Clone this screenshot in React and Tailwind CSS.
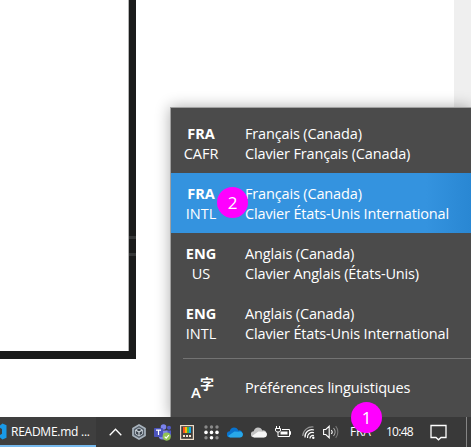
import React from "react";

const layouts = [
  { lang: "FRA", code: "CAFR", name: "Français (Canada)", keyboard: "Clavier Français (Canada)" },
  { lang: "FRA", code: "INTL", name: "Français (Canada)", keyboard: "Clavier États-Unis International", selected: true },
  { lang: "ENG", code: "US", name: "Anglais (Canada)", keyboard: "Clavier Anglais (États-Unis)" },
  { lang: "ENG", code: "INTL", name: "Anglais (Canada)", keyboard: "Clavier États-Unis International" },
];

function LayoutRow({ item }) {
  return (
    <div className={"flex h-[60px] pt-[11px] leading-5 " + (item.selected ? "bg-gradient-to-r from-[#3493df] from-85% to-[#2987d3]" : "")}>
      <div className="w-[60px] text-center text-[14.5px]">
        <div className="font-bold">{item.lang}</div>
        <div>{item.code}</div>
      </div>
      <div className="pl-[14px] text-[14.5px] tracking-[-0.15px] whitespace-nowrap">
        <div>{item.name}</div>
        <div>{item.keyboard}</div>
      </div>
    </div>
  );
}

function LanguageMenu() {
  return (
    <div className="absolute left-[170px] top-[107px] h-[310px] w-[301px] border-l border-t border-[#a0a0a0] bg-[#4b4b4b] pt-[5px] shadow-[0_0_14px_rgba(0,0,0,0.32)]">
      {layouts.map((item, i) => <LayoutRow key={i} item={item} />)}
      <div className="mt-[5px] ml-3 h-px bg-[#737373]" />
      <div className="flex h-[57px] items-center">
        <div className="flex w-[60px] justify-center pl-[3px]">
          <div className="flex items-center">
            <span className="pt-[10px] font-['Open_Sans',sans-serif] text-[15px] leading-[15px] font-semibold">A</span>
            <span className="-ml-px pb-[10px] font-['Noto_Sans_CJK_JP',sans-serif] text-[14px] leading-[14px] font-bold">字</span>
          </div>
        </div>
        <div className="pl-[14px] text-[14.5px] tracking-[-0.18px] whitespace-nowrap">Préférences linguistiques</div>
      </div>
    </div>
  );
}

function Badge({ children, className }) {
  return (
    <div className={"absolute flex size-[31px] items-center justify-center rounded-full bg-[#ff00ff] text-[17px] leading-none text-white " + className}>
      {children}
    </div>
  );
}

function TrayIcons() {
  return (
    <>
      <svg className="ml-[13px] shrink-0" width="13" height="8" viewBox="0 0 13 8" fill="none" stroke="#fff" strokeWidth="1.3"><path d="M.7 7.2 6.5 1.2 12.3 7.2" /></svg>
      <svg className="ml-[9px] shrink-0" width="16" height="18" viewBox="0 0 16 18">
        <path d="M8 2 14 5.400v7.200L8 16 2 12.600V5.400Z" fill="#555e68" stroke="#a9b4be" strokeWidth="1.7" />
        <path d="M8 5 11.4 7v4L8 13 4.600 11V7Z" fill="#3a424b" stroke="#b9c2ca" strokeWidth="1" />
        <path d="M4.600 7 8 9l3.400-2M8 9v4" fill="none" stroke="#cbd2d8" strokeWidth="1.2" />
      </svg>
      <svg className="ml-[7px] shrink-0" width="18" height="17" viewBox="0 0 18 17">
        <circle cx="9.5" cy="3" r="2.8" fill="#7b83eb" /><circle cx="15" cy="3.8" r="2" fill="#5059c9" />
        <path d="M12 6.5h5v4.2a3 3 0 0 1-5 2Z" fill="#5059c9" />
        <path d="M5 6.5h8.5V11a5 5 0 0 1-8.5 3Z" fill="#7b83eb" />
        <rect x="0" y="4" width="9" height="9" rx=".8" fill="#4b53bc" />
        <path d="M2 6.2h5M4.5 6.2V11" stroke="#fff" strokeWidth="1.2" />
        <circle cx="12.7" cy="12.6" r="4.1" fill="#92c353" /><path d="m10.7 12.6 1.5 1.5 2.7-3" fill="none" stroke="#fff" strokeWidth="1.2" />
      </svg>
      <svg className="ml-[8px] shrink-0" width="14" height="15" viewBox="0 0 14 15">
        <rect x=".6" y=".6" width="12.8" height="13.8" fill="#443f3b" stroke="#eadbc8" strokeWidth="1.2" />
        <path d="M3 2h2v6H3Z" fill="#f35325" /><path d="M5 2h2v6H5Z" fill="#ffb900" /><path d="M7 2h2v6H7Z" fill="#45b649" /><path d="M9 2h2v6H9Z" fill="#0ea5e9" />
        <path d="M3 10h2v2H3ZM6 10h2v2H6ZM9 10h2v2H9Z" fill="#f4e6d4" />
      </svg>
      <svg className="ml-[10px] shrink-0" width="15" height="15" viewBox="0 0 15 15">
        <g fill="#8a8a8a"><circle cx="2" cy="2" r="1.7" /><circle cx="7.5" cy="2" r="1.7" /><circle cx="13" cy="2" r="1.7" /><circle cx="2" cy="12.7" r="1.7" /><circle cx="13" cy="12.7" r="1.7" /></g>
        <g fill="#fff"><circle cx="2" cy="7.4" r="1.8" /><circle cx="7.5" cy="7.4" r="1.8" /><circle cx="13" cy="7.4" r="1.8" /><circle cx="7.5" cy="12.7" r="1.8" /></g>
      </svg>
      <svg className="ml-[8px] shrink-0" width="16" height="11" viewBox="0 0 16 11">
        <path d="M3 10.3a3 3 0 0 1-.3-6C3.2 1.8 5 .5 7 .5c2.2 0 3.6 1.1 4.3 3a3.4 3.4 0 0 1 1.6 6.8Z" fill="#0873cf" />
        <path d="M3 10.5 1 9l6.4-4.5 4.1.2c2.8-.6 4.4 1 4.4 2.9s-1.2 2.9-3 2.9Z" fill="#28a8ea" />
      </svg>
      <svg className="ml-[8px] shrink-0" width="16" height="11" viewBox="0 0 16 11">
        <path d="M3 10.3a3 3 0 0 1-.3-6C3.2 1.8 5 .5 7 .5c2.2 0 3.6 1.1 4.3 3a3.4 3.4 0 0 1 1.6 6.8Z" fill="#c4c4c4" />
        <path d="M3 10.5 1 9l6.4-4.5 4.1.2c2.8-.6 4.4 1 4.4 2.9s-1.2 2.9-3 2.9Z" fill="#f5f5f5" />
      </svg>
      <svg className="ml-[8px] shrink-0" width="16" height="13" viewBox="0 0 16 13" fill="none" stroke="#fff" strokeWidth="1">
        <path d="M1.500 0v2.500M4.500 0v2.500M.5 2.500h5V4C5.500 5.500 4.500 6 3 6S.5 5.500.5 4ZM3 6v4.500h11.500v-7H7M14.500 5.500h1v3h-1" />
        <path d="M5.500 5.500h7v3h-7Z" fill="#fff" stroke="none" />
      </svg>
      <svg className="ml-[11px] shrink-0" width="13" height="13" viewBox="0 0 13 13" fill="none" strokeWidth="1.2">
        <path d="M.7 10A9.500 9.500 0 0 1 11.500 1" stroke="#969696" />
        <g stroke="#fff"><path d="M3 11.500A7 7 0 0 1 12 4M5.500 12A4.800 4.800 0 0 1 12 6.800M8 12.500a3 3 0 0 1 4-3" /></g>
        <circle cx="11.300" cy="11.800" r="1.200" fill="#fff" />
      </svg>
      <svg className="ml-[8px] shrink-0" width="17" height="14" viewBox="0 0 17 14" fill="none" stroke="#fff" strokeWidth="1.100">
        <path d="M.6 4.500h2.200L6.200 1.200v11.600L2.800 9.500H.6ZM8.300 5a3 3 0 0 1 0 4" />
        <path d="M10.500 3a6 6 0 0 1 0 8" stroke="#b0b0b0" /><path d="M12.700 1.200a9 9 0 0 1 0 11.600" stroke="#777" />
      </svg>
    </>
  );
}

function Taskbar() {
  return (
    <div className="flex h-[30px] items-center bg-[#393939] text-[12px] whitespace-nowrap text-white">
      <div className="flex h-full w-24 items-center border-b-2 border-[#76b9ed] bg-[#3f3f3f]">
        <svg className="shrink-0" width="7" height="17" viewBox="0 0 7 17"><path d="M0 2.500 2.500.5 6.500 2.300v12.400L2.500 16.500 0 14.500V12l2-1.200V6L0 4.800Z" fill="#199ae8" /></svg>
        <span className="ml-1 w-[85px] pt-px tracking-[-0.25px]">README.md ...</span>
      </div>
      <TrayIcons />
      <span className="ml-[10px] w-[24px] tracking-[-0.2px]">FRA</span>
      <span className="ml-[12px] w-[29px] tracking-[-0.75px]">10:48</span>
      <svg className="ml-[15px] shrink-0" width="17" height="17" viewBox="0 0 17 17" fill="none" stroke="#fff" strokeWidth="1.300"><path d="M1 1.500h15v12h-5l-2.500 2.300L6 13.500H1Z" /></svg>
      <div className="ml-auto h-full w-[5px] border-l border-[#858585]" />
    </div>
  );
}

export default function App() {
  return (
    <div className="relative h-[447px] w-[471px] overflow-hidden bg-white font-['Open_Sans','Noto_Sans',sans-serif] text-white">
      <div className="flex h-[417px] justify-between">
        <div className="flex h-[359px] w-[136px] border-b-8 border-[#1a1b1b]">
          <div className="flex-1 border-r border-[#b5b5b5]" />
          <div className="flex w-[7px] flex-col gap-[14px] bg-[#1a1b1b] pt-[236px]">
            <div className="h-[3px] bg-[#353636]" />
            <div className="h-[3px] bg-[#353636]" />
          </div>
        </div>
        <div className="w-[17px] bg-[#efefef]" />
      </div>
      <LanguageMenu />
      <div className="relative"><Taskbar /></div>
      <Badge className="left-[217px] top-[187px]">2</Badge>
      <Badge className="left-[351px] top-[402px]">1</Badge>
    </div>
  );
}
